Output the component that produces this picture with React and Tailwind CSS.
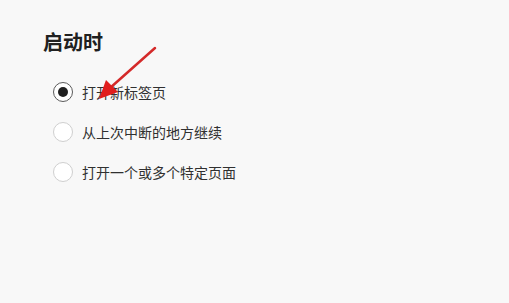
const options = [
  { label: "打开新标签页", checked: true },
  { label: "从上次中断的地方继续", checked: false },
  { label: "打开一个或多个特定页面", checked: false },
];

function Radio({ checked }) {
  if (checked) {
    return (
      <span className="w-5 h-5 rounded-full border-[1.5px] border-[#5a5a5a] bg-white flex items-center justify-center">
        <span className="w-[10px] h-[10px] rounded-full bg-[#1f1f1f]" />
      </span>
    );
  }
  return <span className="w-5 h-5 rounded-full border-[1.5px] border-[#cfcfcf] bg-white" />;
}

export default function App() {
  return (
    <div
      className="relative w-[509px] h-[303px] bg-[#f8f8f8] overflow-hidden"
      style={{ fontFamily: '"Microsoft YaHei", "Noto Sans CJK SC", sans-serif' }}
    >
      <div className="pl-[43px] pt-[27px]">
        <h1 className="text-[20px] leading-[30px] font-bold text-[#202020]">启动时</h1>
        <div className="mt-[25px] flex flex-col gap-[20px]">
          {options.map((o, i) => (
            <div key={i} className="flex items-center h-5 pl-[10px] gap-[9px]">
              <Radio checked={o.checked} />
              <span className="text-[14px] leading-5 text-[#303030]">{o.label}</span>
            </div>
          ))}
        </div>
      </div>

      {/* annotation arrow */}
      <svg className="absolute left-0 top-0" width="509" height="303" viewBox="0 0 509 303">
        <line x1="155" y1="48" x2="110" y2="88" stroke="#d42a2a" strokeWidth="2.5" strokeLinecap="round" />
        <polygon points="99,99 106,80 118,92" fill="#e01e1e" />
      </svg>
    </div>
  );
}
